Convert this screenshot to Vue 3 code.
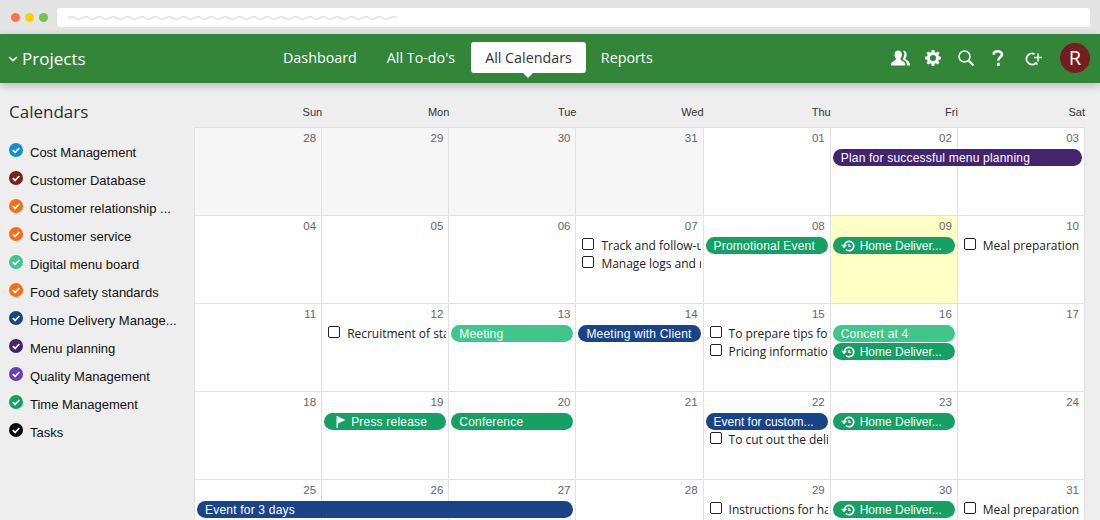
<script setup>
const calendars = [
  { name: 'Cost Management', color: '#0f8fd6' },
  { name: 'Customer Database', color: '#7b2119' },
  { name: 'Customer relationship ...', color: '#f96d16' },
  { name: 'Customer service', color: '#f96d16' },
  { name: 'Digital menu board', color: '#3fc68b' },
  { name: 'Food safety standards', color: '#f96d16' },
  { name: 'Home Delivery Manage...', color: '#1b4387' },
  { name: 'Menu planning', color: '#44246f' },
  { name: 'Quality Management', color: '#6a3bbd' },
  { name: 'Time Management', color: '#17a063' },
  { name: 'Tasks', color: '#0a0a0a' },
]

const days = ['Sun', 'Mon', 'Tue', 'Wed', 'Thu', 'Fri', 'Sat']
const GREEN = '#17a063'
const NAVY = '#1b4387'
const MINT = '#3fc68b'
const PURPLE = '#44246f'

// col = 1 to 7, row = line under the date
const weeks = [
  {
    dates: ['28', '29', '30', '31', '01', '02', '03'],
    muted: [0, 1, 2, 3],
    items: [{ type: 'event', col: 6, span: 2, row: 2, color: PURPLE, text: 'Plan for successful menu planning' }],
  },
  {
    dates: ['04', '05', '06', '07', '08', '09', '10'],
    today: 5,
    items: [
      { type: 'task', col: 4, row: 2, text: 'Track and follow-up on vendors' },
      { type: 'task', col: 4, row: 3, text: 'Manage logs and records' },
      { type: 'event', col: 5, row: 2, color: GREEN, text: 'Promotional Event' },
      { type: 'event', col: 6, row: 2, color: GREEN, icon: 'repeat', text: 'Home Deliver...' },
      { type: 'task', col: 7, row: 2, text: 'Meal preparation' },
    ],
  },
  {
    dates: ['11', '12', '13', '14', '15', '16', '17'],
    items: [
      { type: 'task', col: 2, row: 2, text: 'Recruitment of staff members' },
      { type: 'event', col: 3, row: 2, color: MINT, text: 'Meeting' },
      { type: 'event', col: 4, row: 2, color: NAVY, text: 'Meeting with Client' },
      { type: 'task', col: 5, row: 2, text: 'To prepare tips for the team' },
      { type: 'task', col: 5, row: 3, text: 'Pricing information sheet' },
      { type: 'event', col: 6, row: 2, color: MINT, text: 'Concert at 4' },
      { type: 'event', col: 6, row: 3, color: GREEN, icon: 'repeat', text: 'Home Deliver...' },
    ],
  },
  {
    dates: ['18', '19', '20', '21', '22', '23', '24'],
    items: [
      { type: 'event', col: 2, row: 2, color: GREEN, icon: 'flag', text: 'Press release' },
      { type: 'event', col: 3, row: 2, color: GREEN, text: 'Conference' },
      { type: 'event', col: 5, row: 2, color: NAVY, text: 'Event for custom...' },
      { type: 'task', col: 5, row: 3, text: 'To cut out the delivery costs' },
      { type: 'event', col: 6, row: 2, color: GREEN, icon: 'repeat', text: 'Home Deliver...' },
    ],
  },
  {
    dates: ['25', '26', '27', '28', '29', '30', '31'],
    items: [
      { type: 'event', col: 1, span: 3, row: 2, color: NAVY, text: 'Event for 3 days' },
      { type: 'task', col: 5, row: 2, text: 'Instructions for handling food' },
      { type: 'event', col: 6, row: 2, color: GREEN, icon: 'repeat', text: 'Home Deliver...' },
      { type: 'task', col: 7, row: 2, text: 'Meal preparation' },
    ],
  },
]

const itemPlace = (it) => ({
  gridColumn: `${it.col} / span ${it.span || 1}`,
  gridRow: it.row,
  background: it.color,
})

// the blurred address in the browser bar
const wave = 'M1 3q3.500-2.500 7 0' + 't7 0'.repeat(46)
</script>

<template>
  <div class="page">
    <div class="chrome">
      <span class="dot" style="background:#fb7452"></span>
      <span class="dot" style="background:#fdd000"></span>
      <span class="dot" style="background:#6cc451"></span>
      <div class="address">
        <svg width="332" height="6" viewBox="0 0 332 6">
          <path :d="wave" fill="none" stroke="#e6e6e6" stroke-width="2" />
        </svg>
      </div>
    </div>

    <header class="topbar">
      <div class="project">
        <svg width="10" height="6" viewBox="0 0 10 6"><path d="M1 1l4 3.600L9 1" fill="none" stroke="#fff" stroke-width="1.600" /></svg>
        <span>Projects</span>
      </div>
      <nav class="nav">
        <a>Dashboard</a>
        <a>All To-do's</a>
        <a class="active">All Calendars</a>
        <a>Reports</a>
      </nav>
      <div class="tools">
        <svg width="20" height="16" viewBox="0 0 20 16" fill="#fff">
          <path d="M0 15.500c0-3 1.600-4 3.600-5 1.300-.6 1.600-1.300 1.200-2.200C3.800 7 3.500 5.700 3.500 4.500 3.500 1.800 5.200.5 7.200.5s3.700 1.300 3.700 4c0 1.200-.3 2.500-1.300 3.800-.4.900-.1 1.600 1.200 2.200 2 1 3.600 2 3.600 5z" />
          <path d="M12.400.7c1.900.2 3.300 1.500 3.300 3.800 0 1.200-.3 2.300-1.100 3.400-.4.900-.1 1.500 1 2 1.800.9 3.400 1.900 3.400 5.600h-3c0-3-1.500-4.700-3.500-5.700-.8-.4-.9-1-.4-1.900.8-1.200 1.200-2.500 1.200-3.500 0-1.500-.4-2.700-1.500-3.700z" />
        </svg>
        <svg width="16" height="16" viewBox="0 0 16 16" fill="#fff">
          <path fill-rule="evenodd" d="M6.700 0h2.600l.4 2.200 1.200.5L12.800 1.400l1.800 1.800-1.300 1.900.5 1.200 2.200.4v2.600l-2.200.4-.5 1.200 1.300 1.900-1.800 1.800-1.900-1.300-1.200.5-.4 2.200H6.700l-.4-2.200-1.200-.5-1.900 1.300-1.800-1.800 1.300-1.900-.5-1.200L0 9.300V6.700l2.200-.4.500-1.200-1.300-1.900 1.800-1.800 1.900 1.300 1.200-.5zM8 5a3 3 0 1 0 0 6 3 3 0 0 0 0-6z" />
        </svg>
        <svg class="t-search" width="16" height="16" viewBox="0 0 16 16" fill="none" stroke="#fff">
          <circle cx="6.500" cy="6.500" r="5.500" stroke-width="1.500" />
          <path d="M10.500 10.500l5 5" stroke-width="2" />
        </svg>
        <svg class="t-help" width="12" height="16" viewBox="0 0 12 16" fill="none" stroke="#fff">
          <path d="M1.500 4.600C1.700 2.400 3.300 1.300 5.800 1.300c2.600 0 4.200 1.300 4.200 3.200 0 2.800-3.700 2.800-3.700 6" stroke-width="2.600" />
          <path d="M6.300 12.800v3" stroke-width="2.800" />
        </svg>
        <svg class="t-add" width="18" height="16" viewBox="0 0 18 16" fill="none" stroke="#fff">
          <path d="M11 12.800a5.500 5.500 0 1 1-1.500-8.700" stroke-width="1.900" />
          <path d="M10.500 12.500l2 2" stroke-width="1.700" />
          <path d="M13 3.500v8M9 7.500h8" stroke-width="1.400" />
        </svg>
        <div class="avatar">R</div>
      </div>
    </header>

    <div class="body">
      <aside class="side">
        <h2>Calendars</h2>
        <ul>
          <li v-for="c in calendars" :key="c.name">
            <svg class="check" width="14" height="14" viewBox="0 0 14 14">
              <circle cx="7" cy="7" r="7" :fill="c.color" />
              <path d="M3.800 7.200l2.300 2.300 4.200-4.500" fill="none" stroke="#fff" stroke-width="1.800" />
            </svg>
            <span>{{ c.name }}</span>
          </li>
        </ul>
      </aside>

      <main class="cal">
        <div class="dayhead">
          <div v-for="d in days" :key="d">{{ d }}</div>
        </div>
        <div class="grid">
          <div v-for="w in weeks" :key="w.dates[0]" class="week">
            <div
              v-for="(d, i) in w.dates"
              :key="i"
              class="cell"
              :class="{ muted: w.muted && w.muted.includes(i), today: w.today === i }"
              :style="{ gridColumn: i + 1 }"
            >{{ d }}</div>
            <template v-for="it in w.items" :key="it.text + it.col">
              <div
                v-if="it.type === 'event'"
                class="event"
                :class="{ tight: it.text.endsWith('...') }"
                :style="itemPlace(it)"
              >
                <svg v-if="it.icon === 'repeat'" class="ev-icon" width="14" height="12" viewBox="0 0 14 12" fill="none" stroke="#fff">
                  <path d="M3.300 6a4.700 4.700 0 1 1 1.500 3.500" stroke-width="1.700" />
                  <path d="M0 4.800h6.200L3.100 8.300z" fill="#fff" stroke="none" />
                  <path d="M8 4V6.400H9.800" stroke-width="1.300" />
                </svg>
                <svg v-if="it.icon === 'flag'" class="ev-icon flag" width="10" height="12" viewBox="0 0 10 12">
                  <path d="M0.500 0h1.500v12H0.500z M2 0.500L9.500 4 2 7.500z" fill="#fff" />
                </svg>
                <span>{{ it.text }}</span>
              </div>
              <div v-else class="task" :style="{ gridColumn: it.col, gridRow: it.row }">
                <i class="box"></i>
                <span>{{ it.text }}</span>
              </div>
            </template>
          </div>
        </div>
      </main>
    </div>
  </div>
</template>

<style>
html, body { margin: 0; background: #eeeeee; }
</style>

<style scoped>
.page {
  width: 1100px;
  height: 520px;
  overflow: hidden;
  background: #eeeeee;
  font-family: "Liberation Sans", Arial, sans-serif;
}
.chrome {
  height: 34px;
  box-sizing: border-box;
  background: #e4e4e4;
  display: flex;
  align-items: center;
  gap: 5px;
  padding: 1px 10px 0 11px;
}
.dot { width: 9px; height: 9px; border-radius: 50%; }
.address {
  flex: 1;
  height: 19px;
  margin-left: 4px;
  background: #fff;
  border-radius: 3px;
  display: flex;
  align-items: center;
  padding-left: 10px;
}
.topbar {
  height: 49px;
  background: #33853a;
  box-shadow: 0 3px 8px rgba(0, 0, 0, .22);
  display: grid;
  grid-template-columns: 268px 1fr auto;
  align-items: center;
  position: relative;
  color: #fff;
  font-family: "Open Sans", sans-serif;
}
.project {
  display: flex;
  align-items: center;
  gap: 4px;
  padding-left: 8px;
  font-size: 17px;
  font-weight: 400;
}
.nav { display: flex; align-items: center; font-size: 14.300px; margin-top: -2px; }
.nav a { padding: 0 15px; line-height: 31px; border-radius: 3px; }
.nav .active {
  padding: 0 14px;
  margin-left: 1px;
  background: #fff;
  color: #333;
  position: relative;
}
.nav .active::after {
  content: "";
  position: absolute;
  left: 50%;
  bottom: -5px;
  margin-left: -5px;
  border: 5px solid transparent;
  border-bottom: 0;
  border-top-color: #fff;
}
.tools {
  display: flex;
  align-items: center;
  gap: 14px;
  padding-right: 10px;
  margin-top: -1px;
}
.t-search { margin-left: 3px; }
.t-help { margin-left: 4px; }
.t-add { margin-left: 7px; }
.avatar {
  width: 30px;
  height: 30px;
  margin-left: 3px;
  border-radius: 50%;
  background: #771d1d;
  text-align: center;
  line-height: 30px;
  font-size: 20px;
}
.body { display: flex; }
.side { width: 194px; flex: none; color: #111; }
.side h2 {
  margin: 17px 0 14px 9px;
  font: 400 17px/24px "Open Sans", sans-serif;
  color: #2b2f36;
}
.side ul { list-style: none; margin: 0; padding: 0 0 0 9px; }
.side li {
  height: 28px;
  display: flex;
  align-items: center;
  gap: 7px;
  font-size: 13px;
}
.check { margin-top: -4px; flex: none; }
.cal { width: 891px; }
.dayhead {
  display: grid;
  grid-template-columns: repeat(7, 1fr);
  height: 44px;
  align-items: center;
  margin-left: 1px;
  font-size: 11px;
  color: #333;
  text-align: right;
}
.dayhead div { margin-top: 14px; }
.grid {
  background: #fff;
  border-left: 1px solid #e2e2e2;
}
.week {
  height: 88px;
  box-sizing: border-box;
  display: grid;
  grid-template-columns: repeat(7, 1fr);
  grid-template-rows: 21px 18px 17px 1fr;
}
.cell {
  grid-row: 1 / -1;
  border-top: 1px solid #e2e2e2;
  border-right: 1px solid #e2e2e2;
  text-align: right;
  padding: 3px 5px 0 0;
  font-size: 11.500px;
  line-height: 14px;
  color: #666;
}
.cell.muted { background: #f6f6f6; }
.cell.today { background: #ffffc6; }
.event {
  height: 17px;
  margin: 1px 3px 0 2px;
  border-radius: 9px;
  color: #fff;
  font-size: 12px;
  line-height: 18px;
  padding-left: 8px;
  display: flex;
  align-items: flex-start;
  gap: 5px;
  overflow: hidden;
  white-space: nowrap;
  letter-spacing: .2px;
  z-index: 1;
}
.event.tight { letter-spacing: 0; }
.ev-icon { flex: none; margin-top: 3px; }
.ev-icon.flag { margin-left: 4px; }
.task {
  display: flex;
  align-items: flex-start;
  gap: 7px;
  margin-left: 6px;
  margin-right: 3px;
  overflow: hidden;
  white-space: nowrap;
  font: 12px/19px "Open Sans", sans-serif;
  letter-spacing: -.03px;
  color: #222;
  z-index: 1;
  height: 18px;
}
.box {
  flex: none;
  width: 10px;
  height: 10px;
  margin-top: 2px;
  border: 1px solid #222;
  border-radius: 2px;
  background: #fff;
}
</style>
